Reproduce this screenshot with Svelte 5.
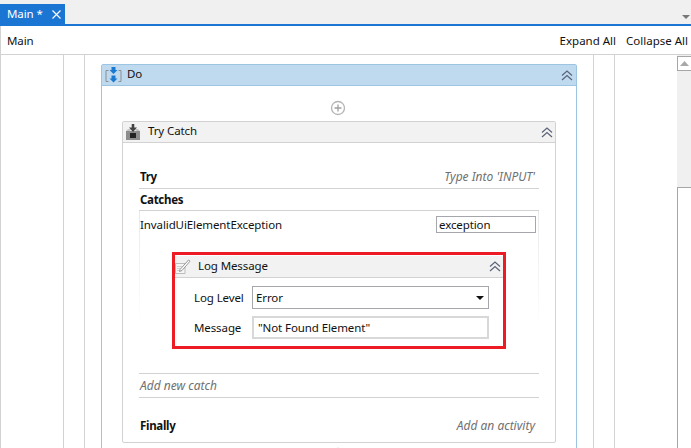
<script>
  const chevrons = "M1 6.5 6 2l5 4.500M1 11 6 6.500l5 4.500";
</script>

{#snippet chev()}
  <svg class="chev" width="12" height="13" viewBox="0 0 12 13"><path d={chevrons} fill="none" stroke="#5a6478" stroke-width="1.2"/></svg>
{/snippet}

<div class="app">
  <div class="tabbar">
    <div class="tab">
      <span>Main *</span>
      <svg width="9" height="9" viewBox="0 0 9 9"><path d="M.5.5l8 8M8.500.5l-8 8" stroke="#fff" stroke-width="1.1" fill="none"/></svg>
    </div>
    <svg class="more" width="8" height="4" viewBox="0 0 8 4"><path d="M0 0h8L4 4z" fill="#777"/></svg>
  </div>
  <div class="toolbar">
    <span>Main</span>
    <div class="actions"><span>Expand All</span><span>Collapse All</span></div>
  </div>
  <div class="body">
    <div class="canvas">
      <div class="guide g1">
        <div class="guide g2">
          <section class="card do">
            <header>
              <svg class="ico" width="17" height="18" viewBox="0 0 17 18">
                <path d="M3.500 4.500H1v11h2.500M13.500 4.500H16v11h-2.500" fill="none" stroke="#8a8f96" stroke-width="1"/>
                <path d="M6.500 1h4v3h2l-4 4-4-4h2zM6.500 9.500h4v3h2l-4 4-4-4h2z" fill="#1b7ad0"/>
              </svg>
              <span>Do</span>
              {@render chev()}
            </header>
            <div class="do-body">
              <svg class="plus" width="16" height="16" viewBox="0 0 16 16"><circle cx="8" cy="8" r="6.500" fill="none" stroke="#b4b4b4" stroke-width="1.300"/><path d="M8 4.500v7M4.500 8h7" stroke="#a0a0a0" stroke-width="1.300"/></svg>
              <section class="card try">
                <header>
                  <svg class="ico" width="16" height="16" viewBox="0 0 16 16">
                    <path d="M1 7h14v9H1z" fill="#8c8c8c"/><path d="M5 9h6v5H5z" fill="#222"/><path d="M1 7h4l1-2H3zM15 7h-4l-1-2h3z" fill="#c4c4c4"/><path d="M6.700 0h2.600v3.500H12L8 8 4 3.500h2.700z" fill="#444"/>
                  </svg>
                  <span>Try Catch</span>
                  {@render chev()}
                </header>
                <div class="try-body">
                  <div class="row try-row"><b>Try</b><i>Type Into 'INPUT'</i></div>
                  <b class="catches">Catches</b>
                  <div class="catch-box">
                    <div class="catch-head"><span>InvalidUiElementException</span><div class="field exc">exception</div></div>
                    <div class="highlight">
                      <div class="card log">
                        <header>
                          <svg class="ico" width="16" height="15" viewBox="0 0 16 15">
                            <path d="M.5 4.500h9.500v10H.5z" fill="#f6f6f6" stroke="#bcbcbc"/><path d="M2 7.500h5M2 9.500h4M2 11.500h4" stroke="#d0d0d0"/><path d="M5 10.500 13.500 1 15 2.200 7 11.500l-2.500 1z" fill="#fff" stroke="#8c8c8c" stroke-width=".9"/>
                          </svg>
                          <span>Log Message</span>
                          {@render chev()}
                        </header>
                        <div class="form">
                          <label for="lvl">Log Level</label>
                          <div class="field select" id="lvl"><span>Error</span><svg width="8" height="4" viewBox="0 0 8 4"><path d="M0 0h8L4 4z" fill="#111"/></svg></div>
                          <label for="msg">Message</label>
                          <div class="field msg" id="msg">"Not Found Element"</div>
                        </div>
                      </div>
                    </div>
                  </div>
                  <i class="add-catch">Add new catch</i>
                  <div class="row finally"><b>Finally</b><i>Add an activity</i></div>
                </div>
              </section>
              <svg class="plus bottom" width="16" height="16" viewBox="0 0 16 16"><circle cx="8" cy="8" r="6.500" fill="none" stroke="#b4b4b4" stroke-width="1.300"/></svg>
            </div>
          </section>
        </div>
      </div>
    </div>
    <div class="scroll">
      <div class="thumb-btn"><svg width="9" height="5" viewBox="0 0 9 5"><path d="M0 5 4.500 0 9 5z" fill="#a8a8a8"/></svg></div>
      <div class="track"></div>
    </div>
  </div>
</div>

<style>
  :global(body) { margin: 0; }
  .app {
    width: 691px; height: 448px; overflow: hidden; background: #fff; color: #111;
    font: 11.5px/16px "Noto Sans", sans-serif; letter-spacing: -0.1px; display: flex; flex-direction: column;
  }
  .tabbar {
    height: 24px; flex: none; background: #f0f0f0; border-bottom: 2px solid #1b76d3;
    display: flex; justify-content: space-between; align-items: flex-end;
  }
  .tab {
    width: 65px; height: 20px; box-sizing: border-box; background: #1b76d3; color: #fff;
    display: flex; align-items: center; gap: 9px; padding-left: 7px;
  }
  .more { margin: 0 1px 5px 0; }
  .toolbar {
    height: 29px; flex: none; box-sizing: border-box; border: solid #d2d2d2; border-width: 0 0 1px 1px;
    display: flex; justify-content: space-between; align-items: center; padding: 2px 3px 0 6px;
  }
  .actions { display: flex; gap: 10px; letter-spacing: 0; }
  .body { flex: 1; min-height: 0; display: flex; border-left: 1px solid #d2d2d2; }
  .canvas { flex: 1; min-width: 0; overflow: hidden; }
  .guide { border: solid #d2d2d2; border-width: 0 1px; height: 100%; box-sizing: border-box; }
  .g1 { margin: 0 62px; }
  .g2 { margin: 0 20px; padding: 9px 16px 0; }
  .card { box-sizing: border-box; border: 1px solid #d2d2d2; border-radius: 2px; background: #fff; }
  .card header {
    display: flex; align-items: center; background: #f2f2f2; border-bottom: 1px solid #d2d2d2;
    height: 21px; box-sizing: border-box;
  }
  .card header span { margin-bottom: 2px; }
  .ico { flex: none; }
  .chev { margin-left: auto; margin-right: 2px; }
  .do { border-color: #9cc5e4; }
  .do > header { background: #bfdaee; border-bottom-color: #9cc5e4; gap: 5px; padding-left: 3px; }
  .do > header .chev { margin-right: 3px; }
  .do-body { display: flex; flex-direction: column; align-items: center; padding: 14px 20px 0; }
  .plus { flex: none; margin-right: 2px; }
  .plus.bottom { margin-top: 4px; }
  .try { width: 434px; margin-top: 5px; }
  .try > header { gap: 7px; padding-left: 2px; }
  .try-body { padding: 26px 16px 0; }
  .row { display: flex; justify-content: space-between; }
  i { color: #707070; font-size: 12px; letter-spacing: 0; }
  b { font-weight: 700; letter-spacing: -0.3px; }
  .try-row { padding: 0 4px 4px 1px; height: 20px; box-sizing: border-box; border-bottom: 1px solid #d2d2d2; align-items: center; }
  .catches { display: block; height: 21px; line-height: 22px; padding-left: 1px; }
  .catch-box {
    border-top: 1px solid #d2d2d2; border-bottom: 1px solid #d2d2d2; height: 164px; box-sizing: border-box; padding-top: 5px;
    background:
      linear-gradient(#e8e8e8, #fff) left top / 1px 115px no-repeat,
      linear-gradient(#e8e8e8, #fff) right top / 1px 115px no-repeat;
  }
  .catch-head { display: flex; justify-content: space-between; align-items: center; padding: 0 3px 0 1px; height: 17px; }
  .field { box-sizing: border-box; border: 1px solid #a6a6ad; background: #fff; }
  .exc { width: 100px; height: 17px; line-height: 15px; padding-left: 2px; }
  .highlight { margin: 19px 0 0 33px; width: 334px; height: 97px; box-sizing: border-box; border: 3px solid #ed1c24; padding-top: 1px; }
  .log { border: 0; border-radius: 0; }
  .card.log > header { gap: 7px; height: 22px; }
  .form { display: grid; grid-template-columns: 77px 237px; grid-template-rows: 23px 23px; row-gap: 7px; padding-top: 8px; align-items: center; }
  label { justify-self: start; margin-left: 19px; }
  .select { height: 23px; display: flex; justify-content: space-between; align-items: center; padding: 0 4px 0 3px; }
  .msg { height: 23px; border: 2px solid #d8d8d8; line-height: 19px; padding-left: 4px; }
  .add-catch { display: block; height: 23px; line-height: 23px; padding-left: 1px; border-bottom: 1px solid #d2d2d2; }
  .finally { height: 44px; align-items: center; padding: 11px 4px 0 1px; box-sizing: border-box; }
  .scroll { width: 14px; flex: none; background: #f0f0f0; display: flex; flex-direction: column; }
  .thumb-btn { height: 15px; margin-top: 1px; box-sizing: border-box; border: solid #a6a6a6; border-width: 1px 0 1px 1px; background: #fff; display: flex; align-items: center; justify-content: center; }
  .track { flex: 1; margin-top: 116px; border: solid #a6a6a6; border-width: 1px 0 0 1px; background: #fff; }
</style>
